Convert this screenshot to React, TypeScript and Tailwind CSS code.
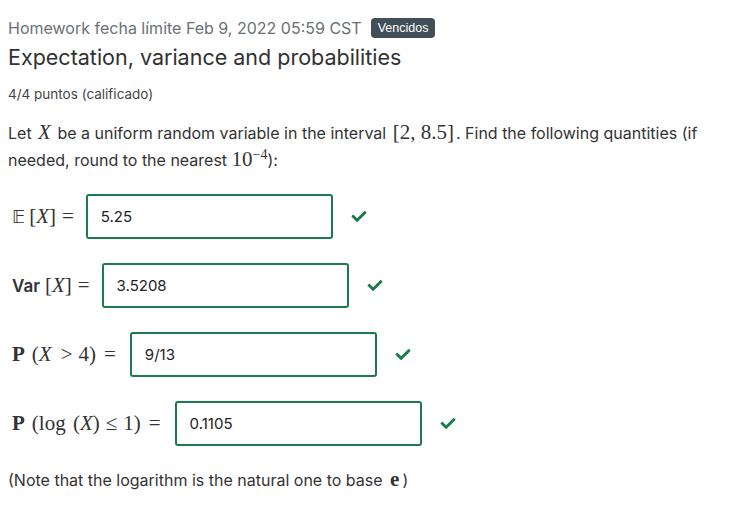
import { FaCheck } from "react-icons/fa";

const serif = "font-['Liberation_Serif',serif]";

function Rel({ children }: { children: React.ReactNode }) {
  return <span className="mx-[6px]">{children}</span>;
}

function Answer({ label, value }: { label: React.ReactNode; value: string }) {
  return (
    <div className="flex items-center h-[45px]">
      <div className={`flex items-center text-[21px] text-[#333] pl-1 pr-[6px] ${serif}`}>{label}</div>
      <div className="w-[247px] h-[45px] border-2 border-[#1b7b4d] rounded-[3px] flex items-center pl-[13px] text-[15px] text-[#222]">
        {value}
      </div>
      <FaCheck className="ml-[17px] text-[#1b7b4d] w-[18px] h-[15px]" />
    </div>
  );
}

export default function App() {
  return (
    <div className="bg-white min-h-[507px] px-2 pt-[17px] font-['Inter',sans-serif] text-[#333]">
      <div className="flex items-center gap-[9px] h-[22px]">
        <span className="text-[16px] text-[#6b7074]">Homework fecha límite Feb 9, 2022 05:59 CST</span>
        <span className="bg-[#424f58] text-white text-[12.5px] leading-none px-[7px] py-[4px] rounded-[4px] font-['Liberation_Sans',sans-serif]">
          Vencidos
        </span>
      </div>
      <h1 className="text-[21.5px] leading-[30px] mt-[3px] text-[#313131]">Expectation, variance and probabilities</h1>
      <div className="text-[13.5px] mt-[12px] text-[#444]">4/4 puntos (calificado)</div>
      <p className="text-[16px] leading-[26px] mt-[15px] text-[#333]">
        Let <span className={`${serif} italic text-[21px] mx-[2px]`}>X</span> be a uniform random variable in the interval{" "}
        <span className={`${serif} text-[21px] mx-[2px]`}>[2, 8.5]</span>. Find the following quantities (if needed, round to the nearest{" "}
        <span className={`${serif} text-[21px]`}>
          10<sup className="text-[14px]">−4</sup>
        </span>
        ):
      </p>
      <div className="flex flex-col gap-[24px] mt-[21px]">
        <Answer
          value="5.25"
          label={
            <span>
              <span className="font-['DejaVu_Sans',sans-serif] text-[18px]">𝔼</span>
              <span className="ml-[4px]">[<i>X</i>]</span>
              <Rel>=</Rel>
            </span>
          }
        />
        <Answer
          value="3.5208"
          label={
            <span>
              <span className="font-['Inter',sans-serif] font-semibold text-[17px]">Var</span>
              <span className="ml-[5px]">[<i>X</i>]</span>
              <Rel>=</Rel>
            </span>
          }
        />
        <Answer
          value="9/13"
          label={
            <span>
              <b>P</b>
              <span className="ml-[7px]">
                (<i className="mr-[3px]">X</i>
                <Rel>&gt;</Rel>4)
              </span>
              <span className="mx-[8px]">=</span>
            </span>
          }
        />
        <Answer
          value="0.1105"
          label={
            <span>
              <b>P</b>
              <span className="ml-[7px]">
                (log <span className="ml-[2px]">(<i>X</i>)</span>
                <Rel>≤</Rel>1)
              </span>
              <span className="mx-[8px]">=</span>
            </span>
          }
        />
      </div>
      <p className="text-[16px] mt-[18px] text-[#333]">
        (Note that the logarithm is the natural one to base <b className={`${serif} text-[21px] mx-[3px]`}>e</b>)
      </p>
    </div>
  );
}
